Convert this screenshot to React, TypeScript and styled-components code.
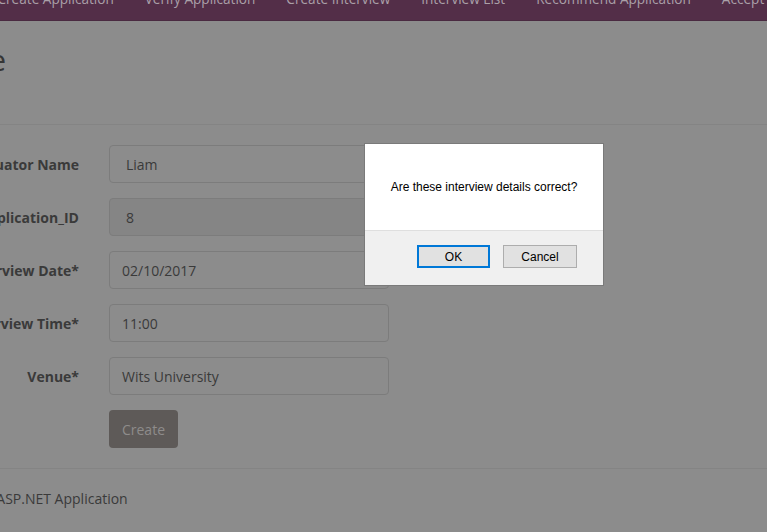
import React from "react";
import styled, { createGlobalStyle } from "styled-components";

const GlobalStyle = createGlobalStyle`
  html, body {
    margin: 0;
    padding: 0;
    background: #8c8c8c;
    overflow: hidden;
  }
  body {
    font-family: "Open Sans", "Noto Sans", sans-serif;
    font-size: 14px;
    color: #393939;
  }
`;

const Page = styled.div`
  width: 767px;
  height: 532px;
  overflow: hidden;
  position: relative;
`;

const NavBar = styled.nav`
  height: 20px;
  background: #532e48;
  border-bottom: 1px solid #4a2a41;
  overflow: hidden;
`;

const NavList = styled.ul`
  display: flex;
  list-style: none;
  margin: -11px 0 0 -18px;
  padding: 0;
  white-space: nowrap;
`;

const NavItem = styled.li`
  padding: 0 15.5px;
  line-height: 20px;
  font-size: 13.6px;
  color: #aaa0a8;
`;

const Content = styled.main`
  margin-left: -86px;
  width: 1140px;
`;

const Title = styled.h2`
  margin: 0;
  padding: 22px 0 0;
  font-size: 30px;
  font-weight: 500;
  line-height: 33px;
  color: #363636;
`;

const Divider = styled.hr`
  margin: ${(props: { gap?: string }) => props.gap || "0"};
  border: 0;
  border-top: 1px solid #848484;
`;

const Form = styled.form`
  display: flex;
  flex-direction: column;
  gap: 15px;
  padding: 20px 0 20px;
`;

const FormRow = styled.div`
  display: flex;
  align-items: center;
  gap: 30px;
`;

const Label = styled.label`
  width: 165px;
  text-align: right;
  font-weight: 700;
  color: #3a3a3a;
`;

const Field = styled.div`
  width: 280px;
  height: 38px;
  box-sizing: border-box;
  border: 1px solid #7c7c7c;
  border-radius: 4px;
  display: flex;
  align-items: center;
  padding-left: ${(props: { indent?: boolean; disabled?: boolean }) =>
    props.indent ? "16px" : "12px"};
  background: ${(props: { indent?: boolean; disabled?: boolean }) =>
    props.disabled ? "#858585" : "transparent"};
  color: #3a3a3a;
`;

const ButtonRow = styled.div`
  padding-left: 195px;
`;

const CreateButton = styled.button`
  height: 38px;
  width: 69px;
  border: 0;
  border-radius: 4px;
  background: #5e5a58;
  color: #8e8c8b;
  font-family: inherit;
  font-size: 14px;
  padding: 0;
`;

const Footer = styled.footer`
  padding: 20px 0 0;
  line-height: 20px;
  color: #3a3a3a;
`;

const Dialog = styled.div`
  position: absolute;
  left: 364px;
  top: 143px;
  width: 240px;
  height: 143px;
  box-sizing: border-box;
  border: 1px solid #7a7a7a;
  background: #f0f0f0;
  display: flex;
  flex-direction: column;
  font-family: "Liberation Sans", Arial, sans-serif;
  color: #000;
`;

const DialogBody = styled.div`
  height: 86px;
  background: #fff;
  border-bottom: 1px solid #dfdfdf;
  display: flex;
  align-items: center;
  justify-content: center;
  font-size: 12px;
`;

const DialogActions = styled.div`
  display: flex;
  justify-content: flex-end;
  gap: 13px;
  padding: 14px 26px 0 0;
`;

const DialogButton = styled.button`
  width: ${(props: { primary?: boolean }) => (props.primary ? "73px" : "74px")};
  height: 23px;
  box-sizing: border-box;
  background: #e1e1e1;
  border: ${(props: { primary?: boolean }) =>
    props.primary ? "2px solid #0078d7" : "1px solid #adadad"};
  font-family: "Liberation Sans", Arial, sans-serif;
  font-size: 12px;
  color: #000;
  padding: 0;
`;

const navLinks = [
  "Create Application",
  "Verify Application",
  "Create Interview",
  "Interview List",
  "Recommend Application",
  "Accept Application",
];

const fields = [
  { label: "Evaluator Name", value: "Liam", indent: true },
  { label: "Application_ID", value: "8", indent: true, disabled: true },
  { label: "Interview Date*", value: "02/10/2017" },
  { label: "Interview Time*", value: "11:00" },
  { label: "Venue*", value: "Wits University" },
];

const App: React.FC = () => (
  <Page>
    <GlobalStyle />
    <NavBar>
      <NavList>
        {navLinks.map((link) => (
          <NavItem key={link}>{link}</NavItem>
        ))}
      </NavList>
    </NavBar>
    <Content>
      <Title>Create</Title>
      <Divider gap="48px 0 0" />
      <Form>
        {fields.map((f) => (
          <FormRow key={f.label}>
            <Label>{f.label}</Label>
            <Field indent={f.indent} disabled={f.disabled}>
              {f.value}
            </Field>
          </FormRow>
        ))}
        <ButtonRow>
          <CreateButton type="button">Create</CreateButton>
        </ButtonRow>
      </Form>
      <Divider />
      <Footer>&copy; 2017 - My ASP.NET Application</Footer>
    </Content>
    <Dialog role="dialog">
      <DialogBody>Are these interview details correct?</DialogBody>
      <DialogActions>
        <DialogButton primary>OK</DialogButton>
        <DialogButton>Cancel</DialogButton>
      </DialogActions>
    </Dialog>
  </Page>
);

export default App;
